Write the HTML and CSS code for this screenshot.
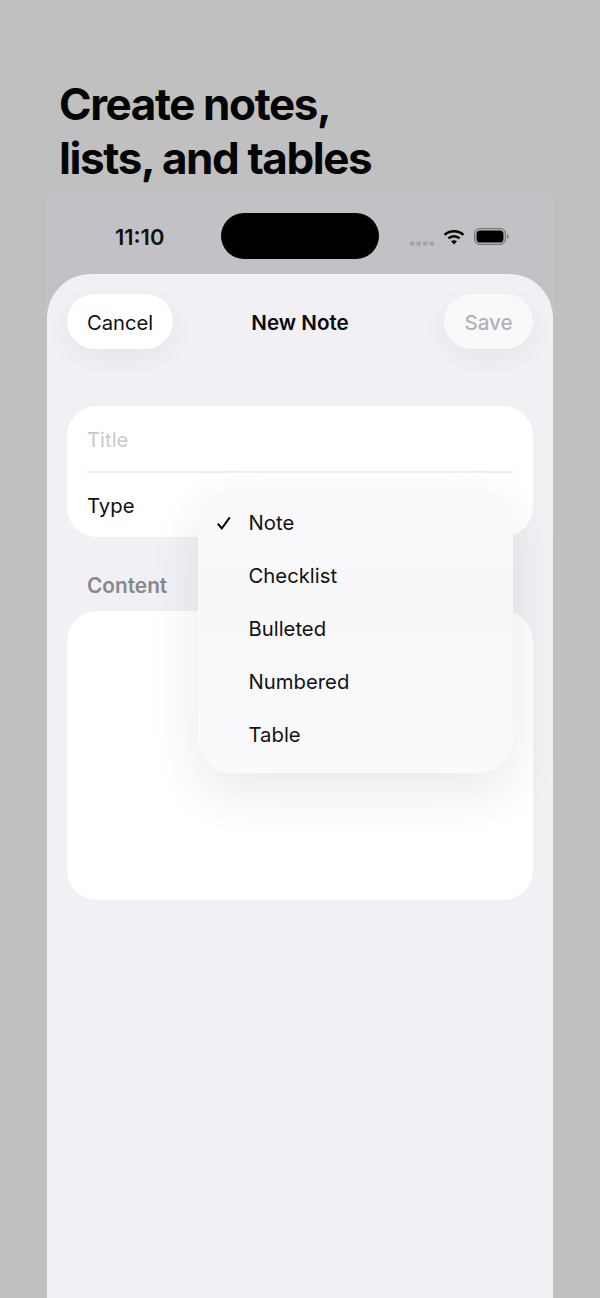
FILE: index.html
```html
<!DOCTYPE html>
<html lang="en">
<head>
<meta charset="utf-8">
<title>New Note</title>
<link rel="stylesheet" href="styles.css">
</head>
<body>
<h1 class="headline">Create notes,<br>lists, and tables</h1>
<div class="phone">
  <div class="status">
    <span class="time">11:10</span>
    <div class="island"></div>
    <div class="status-icons">
      <svg class="signal" width="25" height="5" viewBox="0 0 25 5"><g fill="#a3a3a7"><rect x="0" y="0.5" width="4.5" height="4"/><rect x="6.5" y="0.5" width="4.5" height="4"/><rect x="13" y="0.5" width="4.5" height="4"/><rect x="19.5" y="0.5" width="4.5" height="4"/></g></svg>
      <svg class="wifi" width="22" height="16" viewBox="0 0 22 16"><path d="M1.6 5.9C6.8 1 15.2 1 20.4 5.9" fill="none" stroke="#000" stroke-width="2.6"/><path d="M5.4 9.4C8.6 6.5 13.4 6.5 16.6 9.4" fill="none" stroke="#000" stroke-width="2.6"/><path d="M8 12.2C9.8 10.8 12.2 10.8 14 12.2L11 15.6Z" fill="#000"/></svg>
      <svg class="battery" width="35" height="17" viewBox="0 0 35 17"><rect x="0.7" y="0.7" width="30.6" height="15.6" rx="5" fill="none" stroke="#77777b" stroke-width="1.3"/><rect x="2.5" y="2.5" width="27" height="12" rx="3.6" fill="#000"/><path d="M33 6v5c1-.4 1.6-1.4 1.6-2.500S34 6.400 33 6z" fill="#77777b"/></svg>
    </div>
  </div>
  <div class="sheet">
    <div class="nav">
      <div class="pill pill-cancel">Cancel</div>
      <div class="nav-title">New Note</div>
      <div class="pill pill-save">Save</div>
    </div>
    <div class="form">
      <div class="card">
        <div class="row row-title">Title</div>
        <div class="divider"></div>
        <div class="row row-type">Type</div>
      </div>
      <div class="section-label">Content</div>
      <div class="content-box"></div>
      <div class="menu">
        <div class="menu-item"><svg class="check" width="16" height="14" viewBox="0 0 16 14"><path d="M1.800 7.600L5.800 12.400L13.800 1.400" fill="none" stroke="#000" stroke-width="2"/></svg><span>Note</span></div>
        <div class="menu-item"><span>Checklist</span></div>
        <div class="menu-item"><span>Bulleted</span></div>
        <div class="menu-item"><span>Numbered</span></div>
        <div class="menu-item"><span>Table</span></div>
      </div>
    </div>
  </div>
</div>
</body>
</html>
```
FILE: styles.css
```css
* { box-sizing: border-box; }
html, body { margin: 0; height: 1298px; overflow: hidden; }
body {
  background: #c0c0c0;
  font-family: Inter, "Liberation Sans", sans-serif;
  color: #000;
  display: flex;
  flex-direction: column;
}
.headline {
  margin: 0;
  padding: 77px 0 0 59px;
  height: 196px;
  font-size: 44px;
  line-height: 54px;
  font-weight: 700;
  letter-spacing: -1.4px;
  color: #050505;
}
.phone {
  margin: 0 47px;
  flex: 1;
  background: #c2c2c6;
  display: flex;
  flex-direction: column;
}
.status {
  height: 78px;
  position: relative;
  display: flex;
  align-items: flex-start;
}
.time {
  margin: 28px 0 0 68px;
  font-size: 22px;
  line-height: 26px;
  font-weight: 600;
  color: #111;
}
.island {
  position: absolute;
  left: 174px;
  top: 17px;
  width: 158px;
  height: 46px;
  border-radius: 23px;
  background: #000;
}
.status-icons {
  position: absolute;
  left: 363px;
  top: 32px;
  display: flex;
  align-items: center;
}
.signal { margin: 13px 0 0 0; }
.wifi { margin: -1px 0 0 8px; }
.battery { margin: -1px 0 0 9px; }
.sheet {
  flex: 1;
  background: #f0f0f5;
  border-radius: 44px 44px 0 0;
  padding: 20px 20px 0;
}
.nav {
  display: grid;
  grid-template-columns: 1fr auto 1fr;
  align-items: center;
  height: 55px;
}
.pill {
  height: 55px;
  padding-top: 2px;
  border-radius: 28px;
  display: flex;
  align-items: center;
  justify-content: center;
  font-size: 20.2px;
  background: #fff;
  box-shadow: 0 8px 24px rgba(0, 0, 0, 0.05);
}
.pill-cancel { width: 106px; color: #111; justify-self: start; }
.pill-save { width: 89px; color: #b2b2b4; font-weight: 500; font-size: 20.6px; background: #f9f9fc; justify-self: end; }
.nav-title {
  font-size: 20.6px;
  line-height: 26px;
  padding-top: 2px;
  font-weight: 600;
  color: #0a0a0a;
}
.form {
  position: relative;
  margin-top: 57px;
}
.card {
  background: #fff;
  border-radius: 30px;
  height: 131px;
  padding: 0 20px;
  display: flex;
  flex-direction: column;
}
.row {
  font-size: 20.3px;
  display: flex;
  align-items: center;
}
.row-title { height: 65px; padding-top: 2px; color: #c9c9cb; }
.divider { height: 2px; background: #eeeef0; }
.row-type { height: 64px; color: #111; }
.section-label {
  margin: 35px 0 0 20px;
  height: 39px;
  font-size: 20.8px;
  line-height: 28px;
  font-weight: 600;
  color: #88888c;
}
.content-box {
  height: 289px;
  background: #fff;
  border-radius: 30px;
}
.menu {
  position: absolute;
  left: 131px;
  top: 84px;
  width: 315px;
  height: 283px;
  padding: 6px 0;
  border-radius: 34px;
  background: linear-gradient(#f9f9fc, #f8f8fb 40%, #fafafb);
  box-shadow: 0 18px 52px rgba(0, 0, 0, 0.09);
}
.menu-item {
  height: 53px;
  padding-left: 50.5px;
  display: flex;
  align-items: center;
  position: relative;
  font-size: 20.3px;
  color: #111;
}
.check { position: absolute; left: 18px; top: 20px; }
```
